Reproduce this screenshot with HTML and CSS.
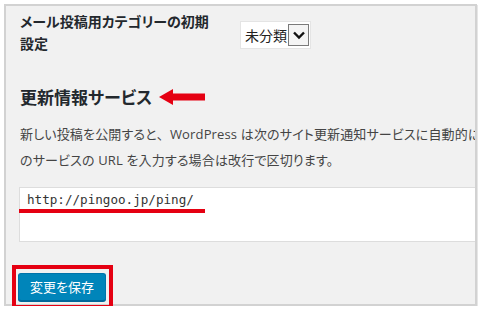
FILE: index.html
```html
<!DOCTYPE html>
<html lang="ja">
<head>
<meta charset="utf-8">
<title>設定</title>
<link rel="stylesheet" href="styles.css">
</head>
<body>
<div class="frame">
  <div class="setting-row">
    <div class="setting-label">メール投稿用カテゴリーの初期<br>設定</div>
    <div class="select">
      <span class="select-value">未分類</span>
      <span class="select-arrow">
        <svg width="14" height="10" viewBox="0 0 14 10"><path d="M2 2.5 L7 7.5 L12 2.5" fill="none" stroke="#111" stroke-width="2.4"/></svg>
      </span>
    </div>
  </div>

  <h2 class="section-title">更新情報サービス<svg class="arrow" width="46" height="18" viewBox="0 0 46 18"><path d="M0 9 L14 1 L14 5.5 L46 5.5 L46 12.5 L14 12.5 L14 17 Z" fill="#e50012"/></svg></h2>

  <p class="desc">新しい投稿を公開すると<span class="full">、</span>WordPress は次のサイト更新通知サービスに自動的に通知します。複数<br>のサービスの URL を入力する場合は改行で区切ります。</p>

  <div class="textarea-wrap">
    <div class="textarea">http://pingoo.jp/ping/</div>
    <span class="underline-mark"></span>
  </div>

  <div class="submit-mark">
    <button class="button-primary">変更を保存</button>
  </div>
</div>
</body>
</html>
```

FILE: styles.css
```css
html, body {
  margin: 0;
  padding: 0;
  background: #ffffff;
}

body {
  font-family: "Noto Sans CJK JP", "Noto Sans", sans-serif;
  font-feature-settings: "palt";
  color: #23282d;
}

.frame {
  margin: 4px 0 0 4px;
  width: 469px;
  height: 298px;
  border: 2px solid #d2d2d2;
  background: #f1f1f1;
  box-shadow: 1px 1px 0 #e6e6e6;
}

.setting-row {
  display: flex;
  align-items: flex-start;
  padding: 4px 0 0 14px;
}

.setting-label {
  width: 220px;
  font-size: 14px;
  font-weight: bold;
  line-height: 22px;
}

.select {
  display: flex;
  align-items: center;
  margin-top: 11px;
  height: 26px;
  padding: 0 1px 0 4px;
  background: #fff;
  border: 1px solid #e4e4e4;
  font-size: 14px;
  color: #222;
}

.select-value {
  line-height: 26px;
  margin-right: 1px;
}

.select-arrow {
  display: flex;
  align-items: center;
  justify-content: center;
  width: 19px;
  height: 20px;
  border: 1px solid #7a7a7a;
  background: #f4f4f4;
}

.section-title {
  margin: 31px 0 0 14px;
  font-size: 17px;
  line-height: 24px;
  font-weight: bold;
  display: flex;
  align-items: center;
}

.arrow {
  margin-left: 7px;
}

.desc {
  margin: 12px 0 0 14px;
  font-size: 13px;
  line-height: 26px;
  color: #444;
  white-space: nowrap;
  overflow: hidden;
  letter-spacing: 0.15px;
  font-family: "Open Sans", "Noto Sans CJK JP", sans-serif;
}

.full {
  font-feature-settings: normal;
}

.textarea-wrap {
  position: relative;
  margin: 14px 0 0 13px;
}

.textarea {
  border: 1px solid #dddddd;
  border-right: none;
  background: #fff;
  padding: 3px 0 0 7px;
  box-sizing: border-box;
  height: 55px;
  font-family: "DejaVu Sans Mono", "Liberation Mono", monospace;
  font-size: 12.6px;
  line-height: 18px;
  color: #333;
}

.underline-mark {
  position: absolute;
  left: 0;
  top: 22px;
  width: 186px;
  height: 4px;
  background: #e50012;
}

.submit-mark {
  display: inline-block;
  margin: 23px 0 0 6px;
  border: 4px solid #e50012;
  padding: 4px 3px 4px 2px;
}

.button-primary {
  display: block;
  width: 88px;
  height: 28px;
  margin: 0;
  padding: 0;
  background: #0085ba;
  border: 1px solid #0073aa;
  border-bottom-color: #006799;
  border-radius: 3px;
  box-shadow: 0 1px 0 #006799;
  color: #fff;
  font-family: "Noto Sans CJK JP", sans-serif;
  font-feature-settings: "palt";
  font-size: 13px;
  line-height: 26px;
}
```
